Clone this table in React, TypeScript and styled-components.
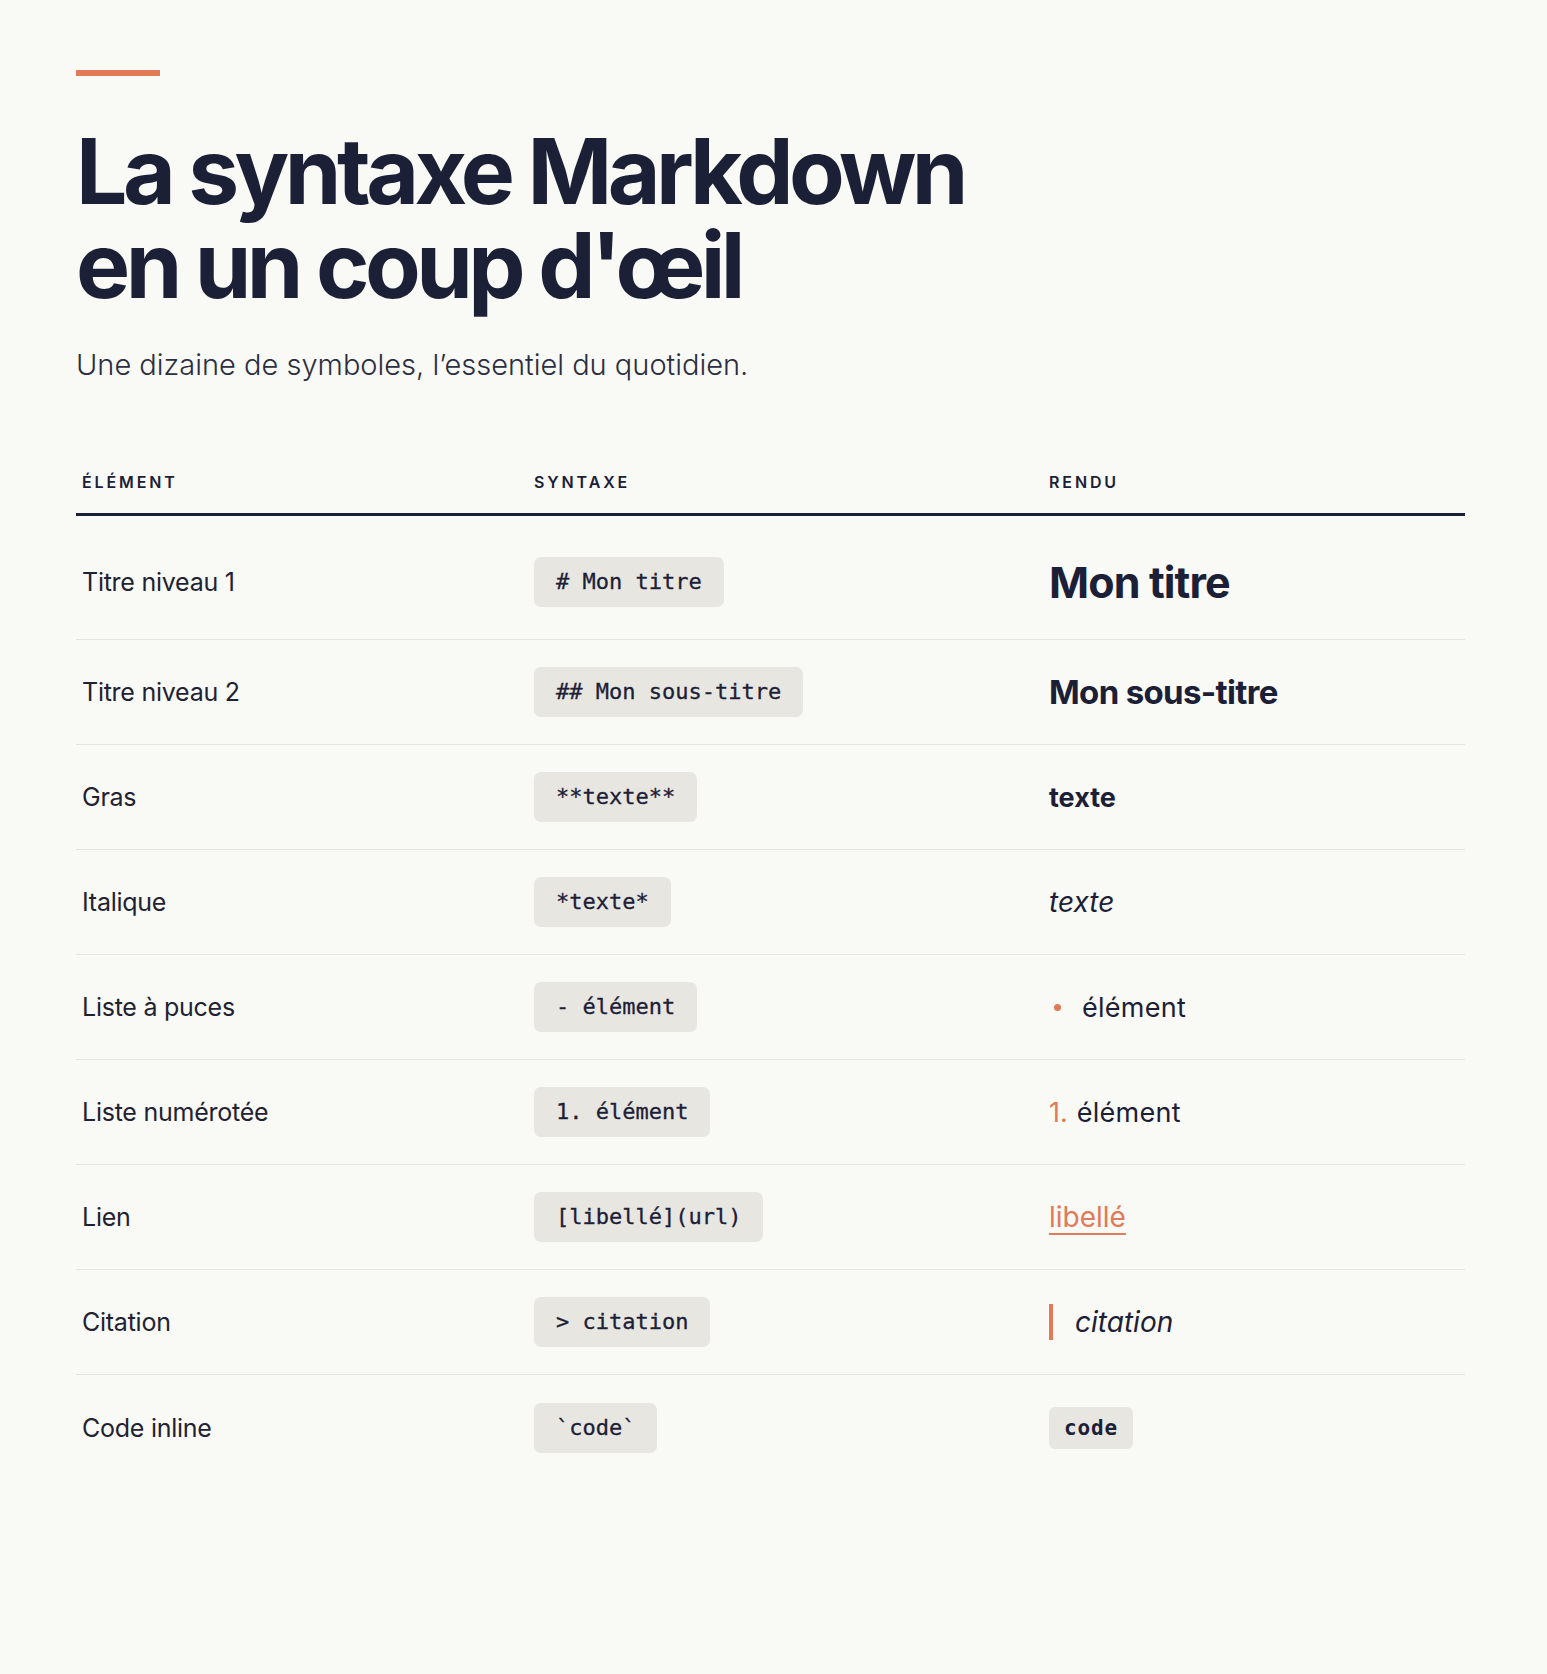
import React from "react";
import styled, { createGlobalStyle } from "styled-components";

const Global = createGlobalStyle`
  html, body { margin: 0; padding: 0; background: #f9f9f5; }
  body { font-family: Inter, "Noto Sans", sans-serif; color: #1c2036; }
  * { box-sizing: border-box; }
`;

const Page = styled.main`
  padding: 70px 0 190px 76px;
  min-height: 1674px;
`;

const Accent = styled.div`
  width: 84px;
  height: 6px;
  background: #e07a57;
`;

const Title = styled.h1`
  margin: 48px 0 0 0;
  font-family: Inter, sans-serif;
  font-weight: 650;
  font-size: 91px;
  line-height: 94px;
  letter-spacing: -0.05em;
  color: #1c2036;
`;

const Subtitle = styled.p`
  margin: 33px 0 0 0;
  font-family: Inter, sans-serif;
  font-weight: 300;
  font-size: 29px;
  line-height: 40px;
  letter-spacing: 0;
  color: #2a2e40;
`;

const Table = styled.div`
  margin-top: 87px;
  width: 1389px;
  display: grid;
  grid-template-columns: 452px 515px 1fr;
`;

const HeadCell = styled.div`
  padding: 0 6px 21px 6px;
  border-bottom: 3px solid #1c2036;
  font-family: Inter, sans-serif;
  font-weight: 600;
  font-size: 16px;
  line-height: 20px;
  letter-spacing: 0.18em;
  color: #1c2036;
`;

const Cell = styled.div<{ $tall?: boolean; $last?: boolean }>`
  min-height: ${(p) => (p.$tall ? 124 : 105)}px;
  display: flex;
  align-items: center;
  padding: ${(p) => (p.$tall ? "9px 6px 0 6px" : "0 6px")};
  border-bottom: ${(p) => (p.$last ? "none" : "1px solid #e5e3de")};
`;

const Label = styled.span`
  font-family: Inter, sans-serif;
  font-weight: 400;
  font-size: 25px;
  letter-spacing: -0.01em;
  color: #1f2232;
`;

const Chip = styled.code`
  display: inline-block;
  background: #e8e6e1;
  border-radius: 7px;
  padding: 0 22px;
  height: 50px;
  line-height: 50px;
  font-family: "DejaVu Sans Mono", "Liberation Mono", monospace;
  font-size: 22px;
  font-weight: 400;
  color: #1c2036;
  -webkit-text-stroke: 0.3px #1c2036;
`;

const Render = styled.span<{ $kind: string }>`
  font-family: Inter, sans-serif;
  color: #1c2036;
  letter-spacing: 0;
  ${(p) =>
    p.$kind === "h1" &&
    `font-size: 43px; font-weight: 700; letter-spacing: -0.02em;`}
  ${(p) =>
    p.$kind === "h2" &&
    `font-size: 33px; font-weight: 650; letter-spacing: -0.02em;`}
  ${(p) => p.$kind === "bold" && `font-size: 27px; font-weight: 700;`}
  ${(p) =>
    p.$kind === "italic" &&
    `font-size: 28px; font-weight: 400; font-style: italic;`}
  ${(p) => p.$kind === "plain" && `font-size: 27px; font-weight: 400; letter-spacing: 0.01em;`}
`;

const BulletItem = styled.span`
  display: inline-flex;
  align-items: center;
  gap: 21px;
  padding-left: 5px;
`;

const Dot = styled.span`
  width: 7px;
  height: 7px;
  border-radius: 50%;
  background: #e07a57;
`;

const NumItem = styled.span`
  display: inline-flex;
  align-items: baseline;
  gap: 9px;
`;

const Num = styled.span`
  font-family: Inter, sans-serif;
  font-size: 27px;
  color: #e07a57;
`;

const Link = styled.a`
  font-family: Inter, sans-serif;
  font-size: 28px;
  font-weight: 400;
  letter-spacing: 0;
  color: #e07a57;
  text-decoration: underline;
  text-decoration-thickness: 2px;
  text-underline-offset: 6px;
`;

const Quote = styled.span`
  display: inline-block;
  border-left: 4px solid #e07a57;
  padding: 0 0 0 22px;
  line-height: 36px;
  font-family: Inter, sans-serif;
  font-size: 28px;
  font-style: italic;
  letter-spacing: 0;
  color: #1c2036;
`;

const RenderCode = styled.code`
  display: inline-block;
  background: #e8e6e1;
  border-radius: 6px;
  padding: 0 15px;
  height: 42px;
  line-height: 42px;
  font-family: "DejaVu Sans Mono", monospace;
  font-size: 21px;
  font-weight: 700;
  letter-spacing: 0.04em;
  color: #1c2036;
`;

type Row = { label: string; syntax: string; render: React.ReactNode; tall?: boolean };

const rows: Row[] = [
  { label: "Titre niveau 1", syntax: "# Mon titre", render: <Render $kind="h1">Mon titre</Render>, tall: true },
  { label: "Titre niveau 2", syntax: "## Mon sous-titre", render: <Render $kind="h2">Mon sous-titre</Render> },
  { label: "Gras", syntax: "**texte**", render: <Render $kind="bold">texte</Render> },
  { label: "Italique", syntax: "*texte*", render: <Render $kind="italic">texte</Render> },
  {
    label: "Liste à puces",
    syntax: "- élément",
    render: (
      <BulletItem>
        <Dot />
        <Render $kind="plain">élément</Render>
      </BulletItem>
    ),
  },
  {
    label: "Liste numérotée",
    syntax: "1. élément",
    render: (
      <NumItem>
        <Num>1.</Num>
        <Render $kind="plain">élément</Render>
      </NumItem>
    ),
  },
  { label: "Lien", syntax: "[libellé](url)", render: <Link href="#">libellé</Link> },
  { label: "Citation", syntax: "> citation", render: <Quote>citation</Quote> },
  { label: "Code inline", syntax: "`code`", render: <RenderCode>code</RenderCode> },
];

export default function App() {
  return (
    <>
      <Global />
      <Page>
        <Accent />
        <Title>
          La syntaxe Markdown
          <br />
          en un coup d'œil
        </Title>
        <Subtitle>Une dizaine de symboles, l’essentiel du quotidien.</Subtitle>
        <Table>
          <HeadCell>ÉLÉMENT</HeadCell>
          <HeadCell>SYNTAXE</HeadCell>
          <HeadCell>RENDU</HeadCell>
          {rows.map((r, i) => {
            const last = i === rows.length - 1;
            return (
              <React.Fragment key={r.label}>
                <Cell $tall={r.tall} $last={last}>
                  <Label>{r.label}</Label>
                </Cell>
                <Cell $tall={r.tall} $last={last}>
                  <Chip>{r.syntax}</Chip>
                </Cell>
                <Cell $tall={r.tall} $last={last}>
                  {r.render}
                </Cell>
              </React.Fragment>
            );
          })}
        </Table>
      </Page>
    </>
  );
}
